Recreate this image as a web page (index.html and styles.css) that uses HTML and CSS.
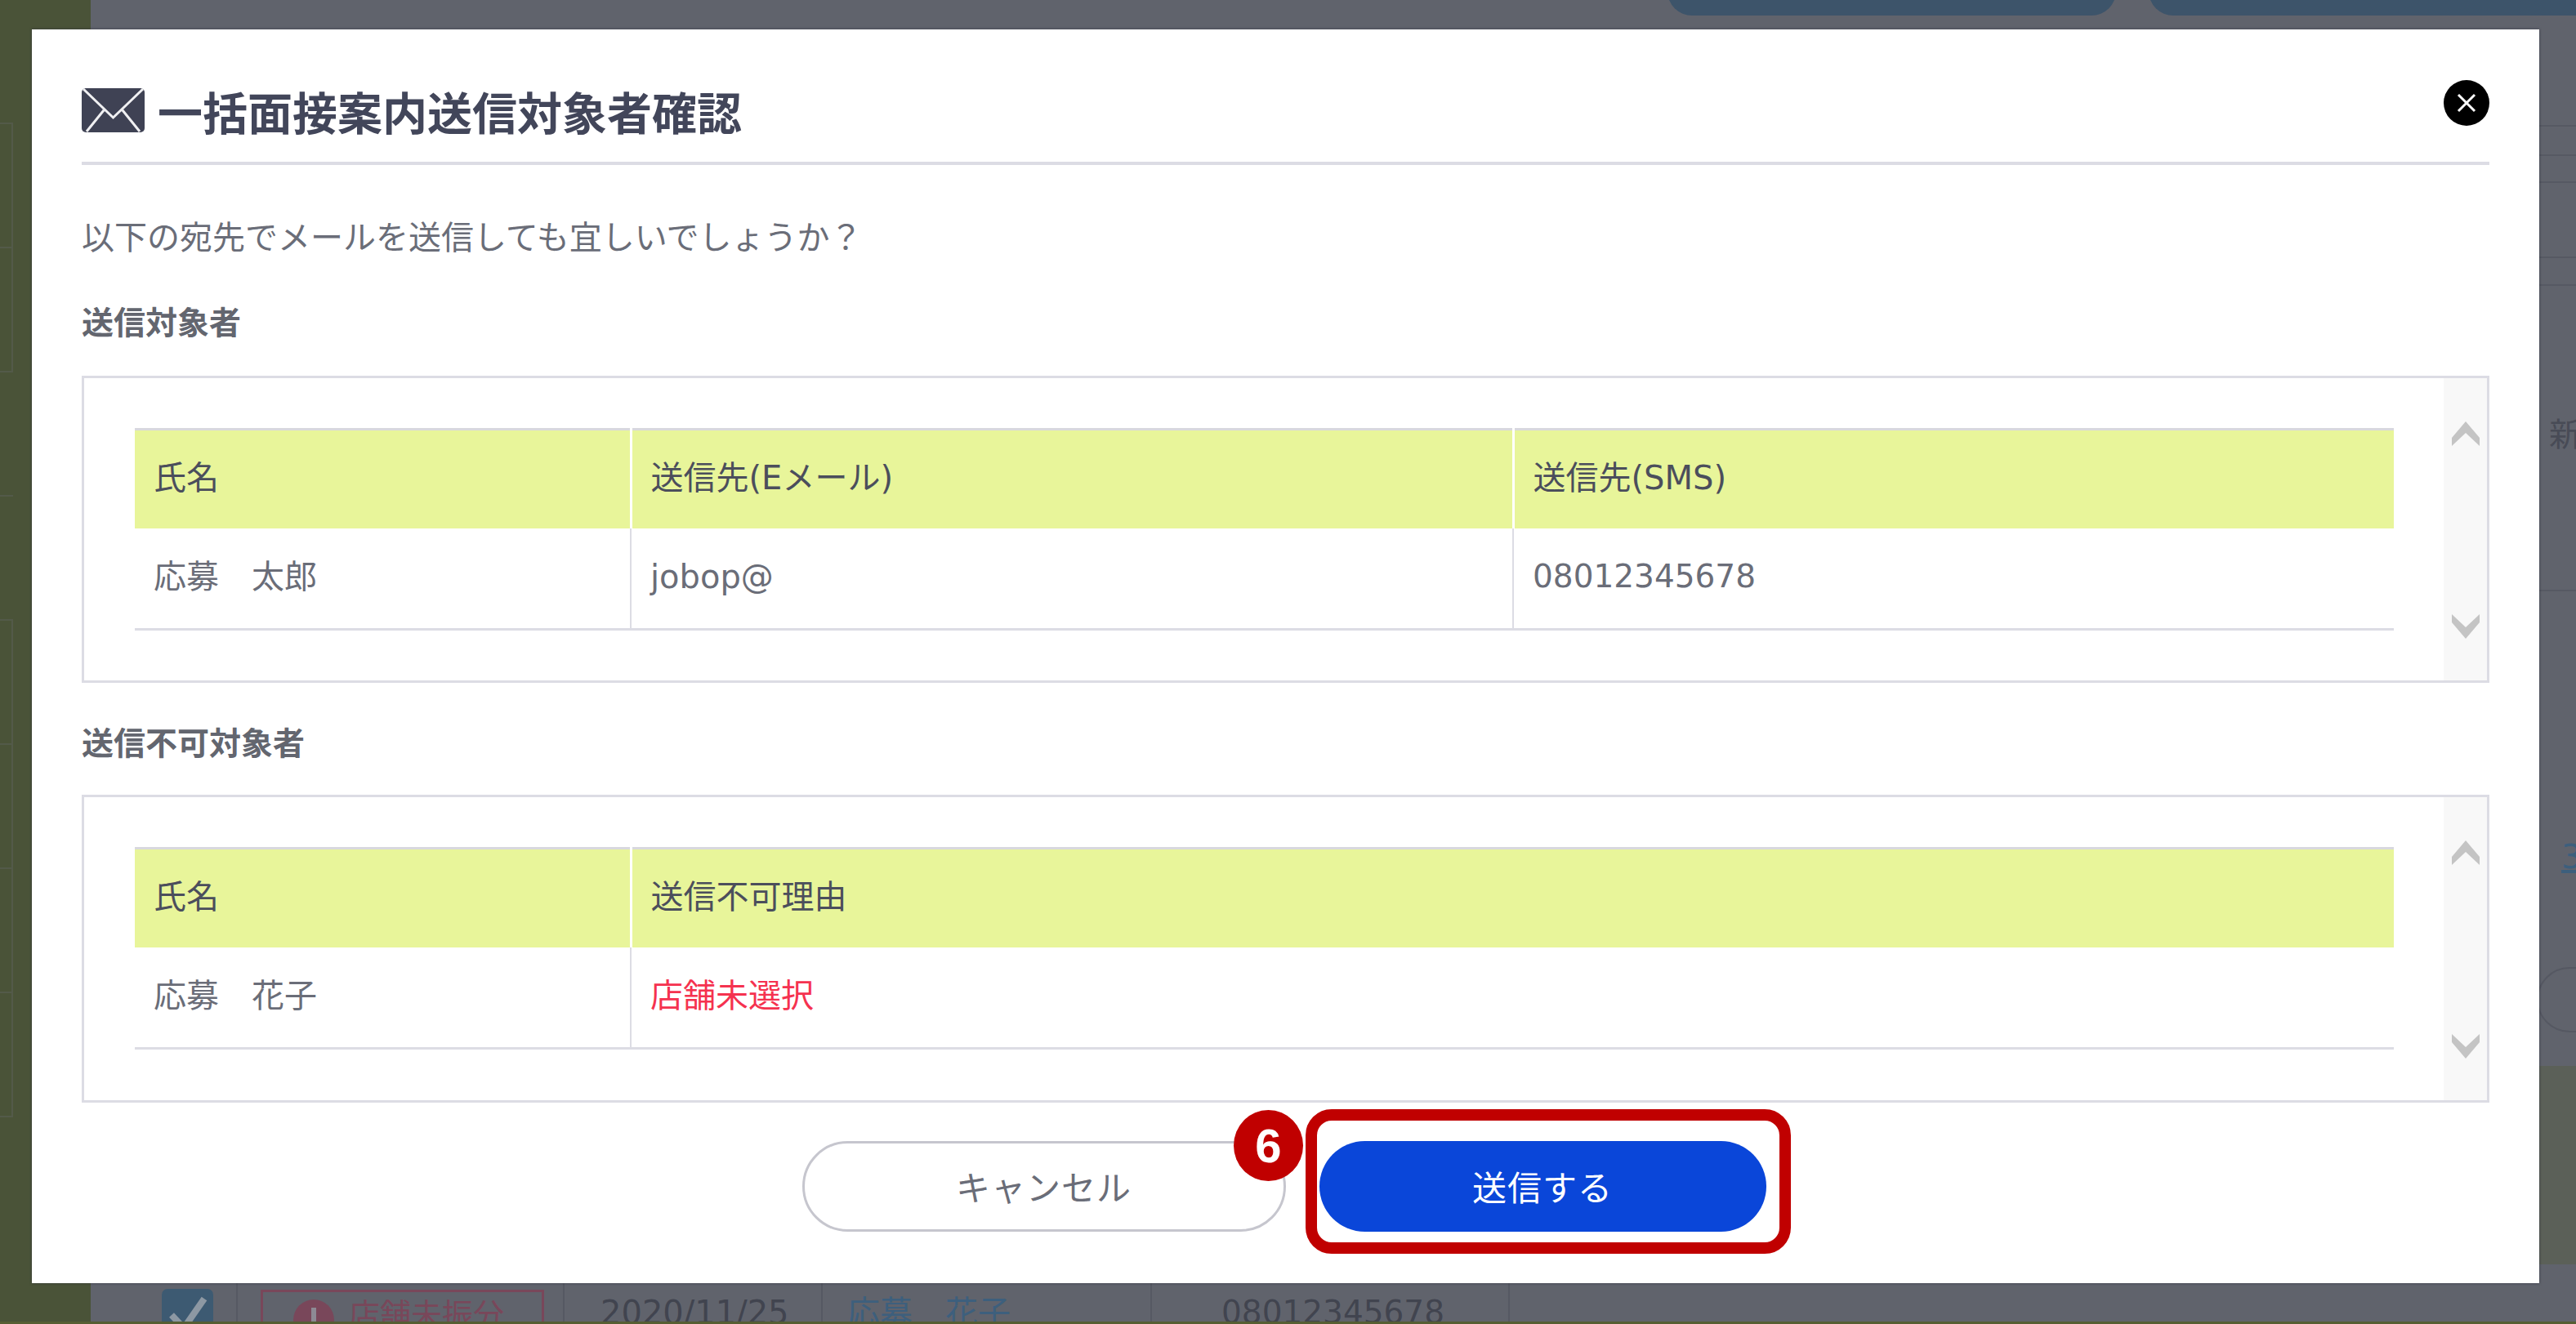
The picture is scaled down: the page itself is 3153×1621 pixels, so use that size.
FILE: index.html
```html
<!DOCTYPE html>
<html lang="ja">
<head>
  <meta charset="UTF-8" />
  <meta name="viewport" content="width=device-width,initial-scale=1.0"/>
  <title>一括面接案内送信対象者確認</title>
  <link rel="stylesheet" href="styles.css">
</head>
<body>

<!-- Page behind the dialog, dimmed -->
<div class="page">
  <div class="page-body">
    <div class="side">
      <div class="side-row boxed"></div>
      <div class="side-row boxed"></div>
      <div class="side-row"></div>
      <div class="side-row"></div>
      <div class="side-row boxed"></div>
      <div class="side-row boxed"></div>
      <div class="side-row boxed"></div>
      <div class="side-row boxed"></div>
      <div class="side-row"></div>
    </div>
    <div class="main">
      <div class="top-actions">
        <div class="top-pill"></div>
        <div class="top-pill wide"></div>
      </div>
      <div class="main-space">
        <div class="peek">
          <div class="peek-row h136"></div>
          <div class="peek-row h36"></div>
          <div class="peek-row h33"></div>
          <div class="peek-row h92"></div>
          <div class="peek-row h34"></div>
          <div class="peek-row h374 peek-text">新規</div>
          <div class="peek-link"><a>3</a></div>
          <div class="peek-pill"></div>
          <div class="peek-band"></div>
        </div>
      </div>
      <div class="list-row">
        <div class="list-cell cell-check">
          <svg class="check" viewBox="0 0 63 63" width="63" height="63">
            <rect width="63" height="63" rx="7" fill="#3d5a72"/>
            <path d="M12 32 L27 48 L52 12" fill="none" stroke="#8d98a3" stroke-width="8"/>
          </svg>
        </div>
        <div class="list-cell cell-status">
          <div class="status">
            <span class="status-dot"></span>
            <span>店舗未振分</span>
          </div>
        </div>
        <div class="list-cell cell-date">2020/11/25</div>
        <div class="list-cell cell-name">応募　花子</div>
        <div class="list-cell cell-phone">08012345678</div>
      </div>
    </div>
  </div>
  <div class="page-strip"></div>
</div>

<div class="modal">
  <div class="modal-head">
    <svg class="mail-icon" viewBox="0 0 77 54" width="77" height="54">
      <rect width="77" height="54" rx="5" fill="#3f4254"/>
      <path d="M2 1 L38.5 36 L75 1 M6 53 L27 27 M71 53 L50 27" fill="none" stroke="#f0f0f2" stroke-width="3"/>
    </svg>
    <h1>一括面接案内送信対象者確認</h1>
  </div>
  <button class="close-btn" type="button">
    <svg viewBox="0 0 24 24" width="24" height="24">
      <path d="M2 2 L22 22 M22 2 L2 22" fill="none" stroke="#fff" stroke-width="3"/>
    </svg>
  </button>

  <p class="lead">以下の宛先でメールを送信しても宜しいでしょうか？</p>

  <h2 class="section-title">送信対象者</h2>
  <div class="panel">
    <div class="panel-body">
      <table class="list">
        <colgroup><col class="col-name"><col class="col-mail"><col></colgroup>
        <tr><th>氏名</th><th>送信先(Eメール)</th><th>送信先(SMS)</th></tr>
        <tr><td>応募　太郎</td><td>jobop@</td><td class="tel">08012345678</td></tr>
      </table>
    </div>
    <div class="scrollbar">
      <svg viewBox="0 0 34 30" width="34" height="30"><path d="M0 20 L17 0 L34 20 L34 30 L17 14 L0 30 Z" fill="#c4c4c4"/></svg>
      <svg viewBox="0 0 34 30" width="34" height="30"><path d="M0 0 L17 16 L34 0 L34 10 L17 30 L0 10 Z" fill="#c4c4c4"/></svg>
    </div>
  </div>

  <h2 class="section-title second">送信不可対象者</h2>
  <div class="panel tall">
    <div class="panel-body">
      <table class="list">
        <colgroup><col class="col-name"><col></colgroup>
        <tr><th>氏名</th><th>送信不可理由</th></tr>
        <tr><td>応募　花子</td><td class="error">店舗未選択</td></tr>
      </table>
    </div>
    <div class="scrollbar">
      <svg viewBox="0 0 34 30" width="34" height="30"><path d="M0 20 L17 0 L34 20 L34 30 L17 14 L0 30 Z" fill="#c4c4c4"/></svg>
      <svg viewBox="0 0 34 30" width="34" height="30"><path d="M0 0 L17 16 L34 0 L34 10 L17 30 L0 10 Z" fill="#c4c4c4"/></svg>
    </div>
  </div>

  <div class="actions">
    <button class="btn btn-cancel" type="button">キャンセル</button>
    <button class="btn btn-send" type="button">送信する</button>
  </div>

  <!-- Manual annotation -->
  <div class="mark-box"></div>
  <div class="mark-num">6</div>
</div>

</body>
</html>
```

FILE: styles.css
```css
* {
  margin: 0;
  padding: 0;
  box-sizing: border-box;
}
html, body {
  height: 100%;
}
body {
  position: relative;
  overflow: hidden;
  font-family: "DejaVu Sans", "Noto Sans CJK JP", sans-serif;
  font-size: 40px;
  background: #60636c;
  color: #6a6d78;
}

/* Dimmed page */
.page {
  height: 100vh;
  display: flex;
  flex-direction: column;
}
.page-body {
  flex: 1;
  display: flex;
  min-height: 0;
  overflow: hidden;
}
.page-strip {
  height: 3px;
  background: #565e33;
}
.side {
  width: 111px;
  padding-top: 150px;
  background: #4a5338;
}
.side-row {
  width: 16px;
  height: 152px;
  border-top: 2px solid #535a49;
}
.side-row.boxed {
  border-right: 2px solid #535a49;
}
.main {
  flex: 1;
  display: flex;
  flex-direction: column;
  min-width: 0;
}
.top-actions {
  height: 19px;
  padding-left: 1930px;
  display: flex;
  gap: 40px;
  overflow: hidden;
}
.top-pill {
  flex: none;
  width: 549px;
  height: 60px;
  margin-top: -41px;
  border-radius: 30px;
  background: #3d546a;
}
.top-pill.wide {
  width: 700px;
}
.main-space {
  flex: 1;
  display: flex;
  justify-content: flex-end;
  min-height: 0;
}
.peek {
  width: 45px;
  overflow: hidden;
}
.peek-row {
  border-bottom: 2px solid #565963;
}
.h136 { height: 136px; }
.h36 { height: 36px; }
.h33 { height: 33px; }
.h92 { height: 92px; }
.h34 { height: 34px; }
.h374 { height: 374px; }
.peek-text {
  width: 100px;
  padding: 152px 0 0 12px;
  line-height: 60px;
  color: #484b56;
  white-space: nowrap;
}
.peek-link {
  height: 460px;
  padding: 295px 0 0 27px;
  line-height: 60px;
  color: #3d5f7d;
}
.peek-link a {
  text-decoration: underline;
}
.peek-pill {
  width: 200px;
  height: 80px;
  margin-left: -3px;
  border: 2px solid #555862;
  border-radius: 40px;
}
.peek-band {
  height: 243px;
  margin-top: 41px;
  background: #5b6058;
}
.list-row {
  height: 47px;
  display: flex;
  overflow: hidden;
  color: #41444f;
  line-height: 60px;
}
.list-cell {
  flex: none;
  height: 100%;
  padding-top: 6px;
  border-right: 2px solid #565963;
  white-space: nowrap;
}
.cell-check {
  width: 180px;
  padding: 7px 0 0 87px;
}
.check {
  display: block;
}
.cell-status {
  width: 400px;
  padding: 8px 0 0 28px;
}
.status {
  width: 347px;
  height: 80px;
  display: flex;
  align-items: flex-start;
  gap: 18px;
  padding: 0 0 0 37px;
  border: 3px solid #79475a;
  font-size: 38px;
  line-height: 56px;
  color: #79475a;
}
.status-dot {
  flex: none;
  display: flex;
  justify-content: center;
  width: 50px;
  height: 50px;
  margin-top: 9px;
  padding-top: 10px;
  border-radius: 50%;
  background: #79475a;
}
.status-dot::before {
  content: "";
  width: 6px;
  height: 20px;
  background: #8d8a94;
}
.cell-date {
  width: 316px;
  padding-left: 44px;
}
.cell-name {
  width: 403px;
  padding-left: 30px;
  color: #3d5f7d;
}
.cell-phone {
  width: 438px;
  padding-left: 85px;
  font-size: 39px;
}

/* Dialog */
.modal {
  position: absolute;
  top: 36px;
  left: 39px;
  width: 3069px;
  height: 1535px;
  padding: 0 61px;
  background: #fff;
  box-shadow: 0 0 3px rgba(40, 42, 55, 0.7);
}
.modal-head {
  height: 166px;
  padding-top: 36px;
  display: flex;
  align-items: center;
  gap: 16px;
  border-bottom: 4px solid #dcdce4;
}
.modal-head h1 {
  font-size: 55px;
  font-weight: bold;
  color: #42465a;
}
.mail-icon {
  flex: none;
}
.close-btn {
  position: absolute;
  top: 62px;
  right: 61px;
  width: 56px;
  height: 56px;
  display: flex;
  align-items: center;
  justify-content: center;
  border: none;
  border-radius: 50%;
  background: #000;
}
.lead {
  margin-top: 59px;
  line-height: 60px;
}
.section-title {
  margin-top: 45px;
  font-size: 39px;
  font-weight: bold;
  line-height: 60px;
  color: #63666f;
}
.section-title.second {
  margin-top: 45px;
}
.panel {
  height: 376px;
  margin-top: 34px;
  display: flex;
  border: 3px solid #dcdce4;
}
.panel.tall {
  height: 377px;
  margin-top: 32px;
}
.panel-body {
  flex: 1;
  min-width: 0;
  padding: 61px 61px 0 62px;
}
.scrollbar {
  flex: none;
  width: 53px;
  display: flex;
  flex-direction: column;
  align-items: center;
  justify-content: space-between;
  padding: 53px 0 51px;
  background: #f8f8f8;
}
.list {
  width: 100%;
  table-layout: fixed;
  border-collapse: collapse;
  line-height: 60px;
}
.col-name { width: 607px; }
.col-mail { width: 1080px; }
.list th {
  height: 121px;
  padding: 0 0 4px 23px;
  border-top: 3px solid #d8d8de;
  border-right: 3px solid #fff;
  background: #e8f59a;
  font-weight: normal;
  text-align: left;
  color: #4b4e5c;
}
.list th:last-child {
  border-right: none;
}
.list td {
  height: 124px;
  padding: 0 0 4px 23px;
  border-right: 2px solid #dcdce4;
  border-bottom: 3px solid #dcdce4;
}
.list td:last-child {
  border-right: none;
}
.list td.tel {
  font-size: 39px;
}
.list td.error {
  color: #f5324f;
}
.actions {
  margin-top: 47px;
  padding-right: 4px;
  display: flex;
  justify-content: center;
  gap: 41px;
}
.btn {
  height: 111px;
  padding-bottom: 3px;
  border-radius: 56px;
  font-family: inherit;
  font-size: 42px;
  letter-spacing: 1px;
}
.btn-cancel {
  width: 592px;
  border: 3px solid #c6c6ce;
  background: #fff;
  color: #6a6d78;
}
.btn-send {
  width: 547px;
  border: none;
  background: #0a46d9;
  color: #fff;
}
.mark-box {
  position: absolute;
  left: 1559px;
  top: 1322px;
  width: 594px;
  height: 177px;
  border: 14px solid #c00000;
  border-radius: 32px;
}
.mark-num {
  position: absolute;
  left: 1471px;
  top: 1323px;
  width: 85px;
  height: 87px;
  border-radius: 50%;
  background: #c00000;
  color: #fff;
  font-family: "Liberation Sans", Arial, sans-serif;
  font-size: 58px;
  font-weight: bold;
  line-height: 87px;
  text-align: center;
}
```
